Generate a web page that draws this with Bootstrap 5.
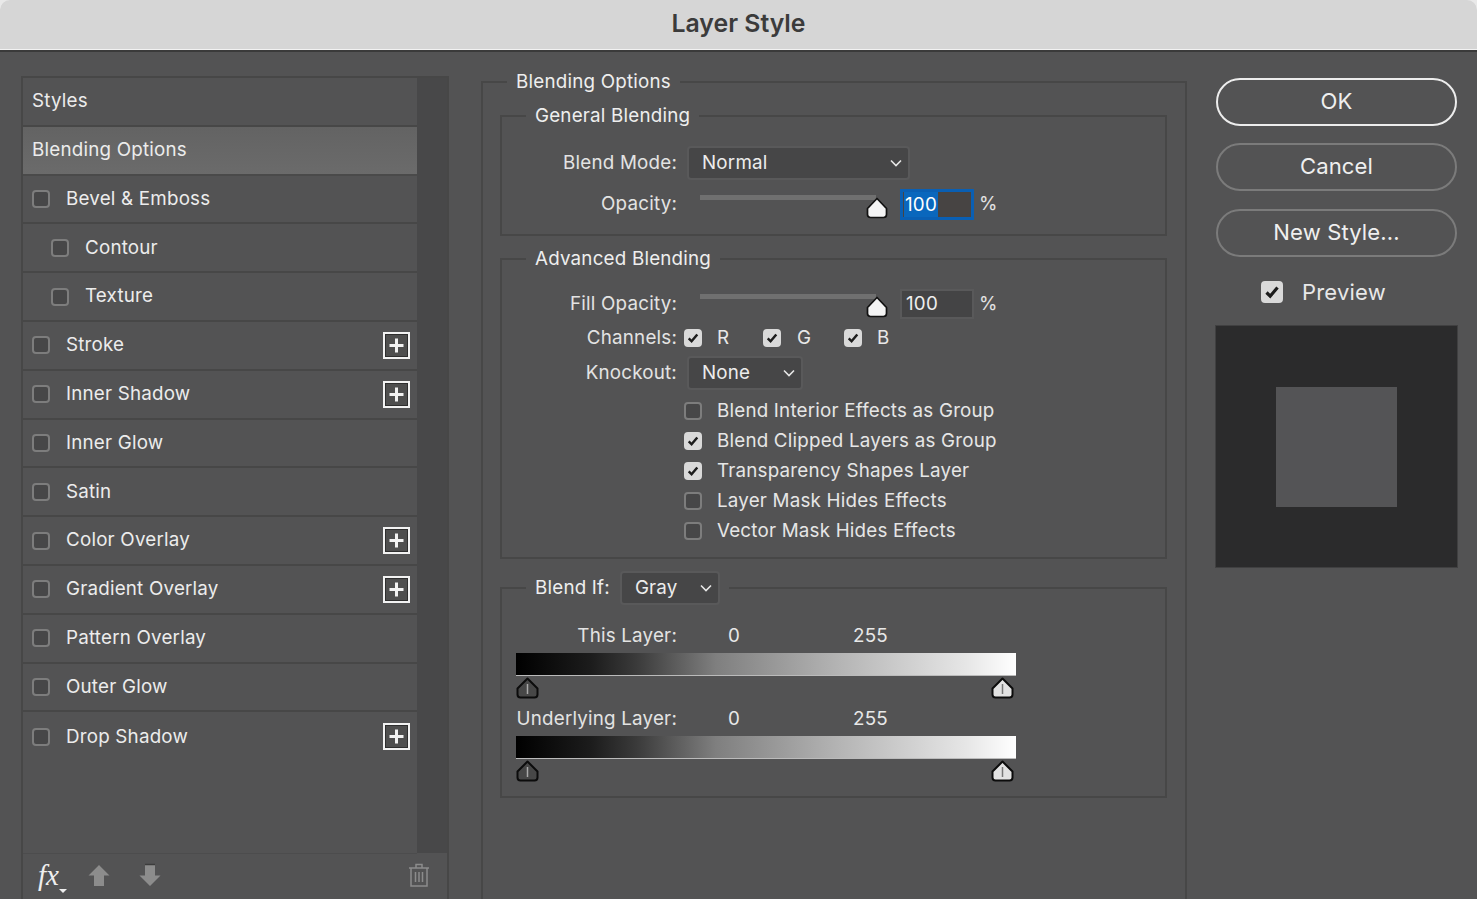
<!DOCTYPE html>
<html lang="en">
<head>
<meta charset="utf-8">
<title>Layer Style</title>
<link href="https://cdn.jsdelivr.net/npm/bootstrap@5.3.0/dist/css/bootstrap.min.css" rel="stylesheet">
<style>
html,body{height:100%;overflow:hidden}
body{background:#e9e9e9;font-family:Inter,"Liberation Sans",sans-serif;font-size:18.8px;color:#e8e8e8;letter-spacing:.2px}
.ttl{height:52px;background:#d6d6d6;border-radius:10px 10px 0 0;border-bottom:2px solid #3a3a3a;box-shadow:inset 0 -1px 0 #f2f2f2;color:#3b3b3b;font-size:24.8px;font-weight:600;letter-spacing:0;padding-bottom:3px}
.mainarea{height:847px;background:#535354}
.leftpane{width:428px;margin-left:21px;margin-top:24px;height:900px;border:2px solid #474747;border-bottom:0;background:#535354}
.leftcols{height:775px}
.stylelist{width:394px;--bs-list-group-bg:transparent;--bs-list-group-color:#ececec;--bs-list-group-border-color:#474747;--bs-list-group-border-width:2px;--bs-list-group-item-padding-x:0;--bs-list-group-item-padding-y:0}
.stylelist .list-group-item{height:48.8px;padding-left:9px;padding-right:7px;display:flex;align-items:center;flex:none}
.stylelist .list-group-item.sel{background:linear-gradient(#636363,#6b6b6b);border-bottom-color:#4a4a4a}
.stylelist .list-group-item.lastrow{border-bottom-color:#505051}
.subrow{padding-left:28px!important}
.scrolltrack{flex:1;background:#484849}
.rowlbl{margin-left:16px}
.toolbar{height:43px;border-top:1px solid #4c4c4d;margin-right:30px}
.fxlabel{font-family:"Liberation Serif",serif;font-style:italic;font-size:29px;line-height:30px;color:#eee;margin-left:15px;letter-spacing:0;width:21px}
.fxcaret{width:0;height:0;border-left:4px solid transparent;border-right:4px solid transparent;border-top:4px solid #eee;align-self:flex-end;margin:0 0 3px 0}
.form-check-input.chk{width:18px;height:18px;margin:0;flex:none;background-color:#474748;border:2px solid #7d7d7d;border-radius:4px;box-shadow:none}
.form-check-input.chk:checked{background-color:#d9d9d9;border-color:#d9d9d9;background-image:url("data:image/svg+xml,%3csvg xmlns='http://www.w3.org/2000/svg' viewBox='0 0 18 18'%3e%3cpath fill='none' stroke='%231c1c1c' stroke-width='3.2' d='M3.500 9.500l3.700 3.700L14.500 4.500'/%3e%3c/svg%3e");background-size:100% 100%}
.form-check-input.chk.chanset{margin-left:7px}
.midpane{width:706px;margin-left:32px}
.grp{border:2px solid #474747;padding:0;min-width:0}
.outergrp{margin-top:18px;height:900px;padding:0 18px 0 17px}
.grp>legend{float:none;width:auto;margin:0 0 0 24px;padding:0 9px;font-size:18.8px;line-height:24px;color:#eeeeee;display:block}
.outergrp>legend{margin-left:7px}
.grp+.grp{margin-top:11px}
.outergrp>.grp:first-of-type{margin-top:10px}
.outergrp>.grp.ifgrp{margin-top:12px}
.lblcol{width:175px;text-align:right;color:#e3e3e3;flex:none}
.frow{display:flex;align-items:center}
.selbox{height:34px;padding:0 24px 0 13px;margin-left:10px;font-size:18.8px;letter-spacing:.2px;background-color:#464647;color:#ececec;border:2px solid #59595a;border-radius:4px;background-image:url("data:image/svg+xml,%3csvg xmlns='http://www.w3.org/2000/svg' viewBox='0 0 14 10'%3e%3cpath fill='none' stroke='%23e6e6e6' stroke-width='1.6' d='M2 2.5l5 5 5-5'/%3e%3c/svg%3e");background-size:14px 10px;background-position:right 5px center;box-shadow:none}
.w223{width:223px}.w116{width:116px}.w100{width:100px}
.slidearea{width:212px;height:30px;position:relative;flex:none;margin-left:11px}
.slidetrk{width:176px;height:5px;background:#707070;margin:5px 0 0 12px}
.slidethumb{position:absolute;left:178px;top:7px;display:block}
.numbox{width:74px;height:30px;background:#444445;border:2px solid #59595a;padding-left:4px;line-height:26px;color:#eee;flex:none}
.numbox.focusbox{height:31px;border-color:#0a5fb3;padding-left:0;background:#474443;border-width:3px;line-height:25px}
.numbox.focusbox span{background:#0a67bd;display:inline-block;padding:0 1px 0 1px;height:25px;color:#fff;margin-left:1px}
.pct{margin-left:5px;color:#e3e3e3}
.chanrow{height:20px;margin-top:9px}
.chanlbl1{width:46px;margin-left:15px}
.chanlbl2{width:47px;margin-left:16px}
.chkrow{height:30px;margin-left:182px;display:flex;align-items:center;color:#e6e6e6}
.chkrow label{margin-left:15px}
.layerrow{height:24px}
.val0{margin-left:51px;width:125px}
.gradbar{width:500px;height:23px;margin-left:14px;margin-top:5px;background:linear-gradient(90deg,#000 0,#1c1c1c 15%,#3a3a3a 24%,#7f7f7f 40%,#b5b5b5 65%,#e6e6e6 90%,#fff 100%);border-bottom:1px solid #bbb}
.thumbs{height:21px;width:500px;margin-left:14px;margin-top:1px;position:relative}
.thumbs svg{position:absolute;top:0}
.thumbs .tl{left:0}.thumbs .tr{left:475px}
.rightpane{width:243px;margin-left:28px;margin-top:26px}
.dlgbtn{height:48px;font-size:22.1px;letter-spacing:.1px;color:#efefef;border:2px solid #7b7b7b;padding:0;display:flex;align-items:center;justify-content:center;background:transparent;margin:0 0 18px 1px;width:241px}
.dlgbtn.primarybtn{border-color:#ededed;margin-bottom:17px}
.dlgbtn:hover{color:#efefef;background:transparent}
.prevrow{margin:10px 0 0 46px;font-size:22px;height:34px}
.prevrow .form-check-input.chk{width:22px;height:22px}
.prevrow label{margin-left:19px}
.prevbox{width:243px;height:243px;background:#2b2b2c;margin-top:16px;border:1px solid #404041}
.prevbox div{width:121px;height:120px;background:#545456}
</style>
</head>
<body>
<div class="ttl d-flex align-items-center justify-content-center">Layer Style</div>
<div class="mainarea d-flex">

  <div class="leftpane">
    <div class="leftcols d-flex">
      <div class="stylelist list-group list-group-flush">
        <div class="list-group-item">Styles</div>
        <div class="list-group-item sel">Blending Options</div>
        <div class="list-group-item"><input class="form-check-input chk" type="checkbox"><span class="rowlbl">Bevel &amp; Emboss</span></div>
        <div class="list-group-item subrow"><input class="form-check-input chk" type="checkbox"><span class="rowlbl">Contour</span></div>
        <div class="list-group-item subrow"><input class="form-check-input chk" type="checkbox"><span class="rowlbl">Texture</span></div>
        <div class="list-group-item"><input class="form-check-input chk" type="checkbox"><span class="rowlbl flex-grow-1">Stroke</span><svg width="27" height="27" viewBox="0 0 27 27"><rect x="1" y="1" width="25" height="25" fill="#4e4e4e" stroke="#f2f2f2" stroke-width="2"/><rect x="2.500" y="2.500" width="22" height="22" fill="none" stroke="#2e2e2e" stroke-width="1"/><path d="M13.500 6.500v14M6.500 13.500h14" stroke="#f2f2f2" stroke-width="3"/></svg></div>
        <div class="list-group-item"><input class="form-check-input chk" type="checkbox"><span class="rowlbl flex-grow-1">Inner Shadow</span><svg width="27" height="27" viewBox="0 0 27 27"><rect x="1" y="1" width="25" height="25" fill="#4e4e4e" stroke="#f2f2f2" stroke-width="2"/><rect x="2.500" y="2.500" width="22" height="22" fill="none" stroke="#2e2e2e" stroke-width="1"/><path d="M13.500 6.500v14M6.500 13.500h14" stroke="#f2f2f2" stroke-width="3"/></svg></div>
        <div class="list-group-item"><input class="form-check-input chk" type="checkbox"><span class="rowlbl">Inner Glow</span></div>
        <div class="list-group-item"><input class="form-check-input chk" type="checkbox"><span class="rowlbl">Satin</span></div>
        <div class="list-group-item"><input class="form-check-input chk" type="checkbox"><span class="rowlbl flex-grow-1">Color Overlay</span><svg width="27" height="27" viewBox="0 0 27 27"><rect x="1" y="1" width="25" height="25" fill="#4e4e4e" stroke="#f2f2f2" stroke-width="2"/><rect x="2.500" y="2.500" width="22" height="22" fill="none" stroke="#2e2e2e" stroke-width="1"/><path d="M13.500 6.500v14M6.500 13.500h14" stroke="#f2f2f2" stroke-width="3"/></svg></div>
        <div class="list-group-item"><input class="form-check-input chk" type="checkbox"><span class="rowlbl flex-grow-1">Gradient Overlay</span><svg width="27" height="27" viewBox="0 0 27 27"><rect x="1" y="1" width="25" height="25" fill="#4e4e4e" stroke="#f2f2f2" stroke-width="2"/><rect x="2.500" y="2.500" width="22" height="22" fill="none" stroke="#2e2e2e" stroke-width="1"/><path d="M13.500 6.500v14M6.500 13.500h14" stroke="#f2f2f2" stroke-width="3"/></svg></div>
        <div class="list-group-item"><input class="form-check-input chk" type="checkbox"><span class="rowlbl">Pattern Overlay</span></div>
        <div class="list-group-item"><input class="form-check-input chk" type="checkbox"><span class="rowlbl">Outer Glow</span></div>
        <div class="list-group-item lastrow"><input class="form-check-input chk" type="checkbox"><span class="rowlbl flex-grow-1">Drop Shadow</span><svg width="27" height="27" viewBox="0 0 27 27"><rect x="1" y="1" width="25" height="25" fill="#4e4e4e" stroke="#f2f2f2" stroke-width="2"/><rect x="2.500" y="2.500" width="22" height="22" fill="none" stroke="#2e2e2e" stroke-width="1"/><path d="M13.500 6.500v14M6.500 13.500h14" stroke="#f2f2f2" stroke-width="3"/></svg></div>
      </div>
      <div class="scrolltrack"></div>
    </div>
    <div class="toolbar d-flex align-items-center">
      <span class="fxlabel">fx</span><span class="fxcaret"></span>
      <svg style="margin-left:20px" width="24" height="24" viewBox="0 0 24 24"><path d="M12 2L22.500 12.500H17V23H7V12.500H1.500z" fill="#8c8c8c"/></svg>
      <svg style="margin-left:27px" width="24" height="24" viewBox="0 0 24 24"><path d="M7 2H17V12.500H22.500L12 23L1.500 12.500H7z" fill="#8c8c8c"/><path d="M7 1.500H17" stroke="#3c3c3c" stroke-width="1.500"/></svg>
      <svg class="ms-auto" style="margin-right:-13px" width="22" height="24" viewBox="0 0 22 24"><g fill="none" stroke="#8c8c8c" stroke-width="1.500"><path d="M1 5h20M8 5V1.500h6V5M3 5v18h16V5M7.500 9v10M11 9v10M14.500 9v10"/></g></svg>
    </div>
  </div>

  <div class="midpane">
    <fieldset class="grp outergrp">
      <legend>Blending Options</legend>

      <fieldset class="grp">
        <legend>General Blending</legend>
        <div class="frow" style="margin-top:18px"><span class="lblcol">Blend Mode:</span><select class="form-select selbox w223"><option>Normal</option></select></div>
        <div class="frow" style="margin:9px 0 14px"><span class="lblcol">Opacity:</span><div class="slidearea"><div class="slidetrk"></div><svg class="slidethumb" width="22" height="22" viewBox="0 0 22 22"><path d="M11 1.500L20.500 11.500V17.500Q20.500 20.500 17.500 20.500H4.500Q1.500 20.500 1.500 17.500V11.500z" fill="#f4f4f4" stroke="#111" stroke-width="1.700" stroke-linejoin="round"/></svg></div><div class="numbox focusbox"><span>100</span></div><span class="pct">%</span></div>
      </fieldset>

      <fieldset class="grp">
        <legend>Advanced Blending</legend>
        <div class="frow" style="margin-top:18px"><span class="lblcol">Fill Opacity:</span><div class="slidearea"><div class="slidetrk"></div><svg class="slidethumb" width="22" height="22" viewBox="0 0 22 22"><path d="M11 1.500L20.500 11.500V17.500Q20.500 20.500 17.500 20.500H4.500Q1.500 20.500 1.500 17.500V11.500z" fill="#f4f4f4" stroke="#111" stroke-width="1.700" stroke-linejoin="round"/></svg></div><div class="numbox">100</div><span class="pct">%</span></div>
        <div class="frow chanrow"><span class="lblcol">Channels:</span><input class="form-check-input chk chanset" type="checkbox" checked><span class="chanlbl1">R</span><input class="form-check-input chk" type="checkbox" checked><span class="chanlbl2">G</span><input class="form-check-input chk" type="checkbox" checked><span class="chanlbl1">B</span></div>
        <div class="frow" style="margin:8px 0 6px"><span class="lblcol">Knockout:</span><select class="form-select selbox w116"><option>None</option></select></div>
        <div class="chkrow"><input class="form-check-input chk" type="checkbox" id="c1"><label for="c1">Blend Interior Effects as Group</label></div>
        <div class="chkrow"><input class="form-check-input chk" type="checkbox" id="c2" checked><label for="c2">Blend Clipped Layers as Group</label></div>
        <div class="chkrow"><input class="form-check-input chk" type="checkbox" id="c3" checked><label for="c3">Transparency Shapes Layer</label></div>
        <div class="chkrow"><input class="form-check-input chk" type="checkbox" id="c4"><label for="c4">Layer Mask Hides Effects</label></div>
        <div class="chkrow" style="margin-bottom:11px"><input class="form-check-input chk" type="checkbox" id="c5"><label for="c5">Vector Mask Hides Effects</label></div>
      </fieldset>

      <fieldset class="grp ifgrp">
        <legend class="frow" style="display:flex"><span>Blend If:</span><select class="form-select selbox w100">
          <option>Gray</option></select></legend>
        <div class="frow layerrow" style="margin-top:19px"><span class="lblcol">This Layer:</span><span class="val0">0</span><span>255</span></div>
        <div class="gradbar"></div>
        <div class="thumbs">
          <svg class="tl" width="24" height="22" viewBox="0 0 24 22"><path d="M11.500 1.500L21.500 11.500V17.500Q21.500 20.500 18.500 20.500H4.500Q1.500 20.500 1.500 17.500V11.500z" fill="#474747" stroke="#0c0c0c" stroke-width="2" stroke-linejoin="round"/><path d="M11.500 7v10" stroke="#aaa" stroke-width="1.500"/></svg>
          <svg class="tr" width="24" height="22" viewBox="0 0 24 22"><path d="M11.500 1.500L21.500 11.500V17.500Q21.500 20.500 18.500 20.500H4.500Q1.500 20.500 1.500 17.500V11.500z" fill="#e2e2e2" stroke="#0c0c0c" stroke-width="2" stroke-linejoin="round"/><path d="M11.500 7v10" stroke="#777" stroke-width="1.500"/></svg>
        </div>
        <div class="frow layerrow" style="margin-top:9px"><span class="lblcol">Underlying Layer:</span><span class="val0">0</span><span>255</span></div>
        <div class="gradbar"></div>
        <div class="thumbs" style="margin-bottom:15px">
          <svg class="tl" width="24" height="22" viewBox="0 0 24 22"><path d="M11.500 1.500L21.500 11.500V17.500Q21.500 20.500 18.500 20.500H4.500Q1.500 20.500 1.500 17.500V11.500z" fill="#474747" stroke="#0c0c0c" stroke-width="2" stroke-linejoin="round"/><path d="M11.500 7v10" stroke="#aaa" stroke-width="1.500"/></svg>
          <svg class="tr" width="24" height="22" viewBox="0 0 24 22"><path d="M11.500 1.500L21.500 11.500V17.500Q21.500 20.500 18.500 20.500H4.500Q1.500 20.500 1.500 17.500V11.500z" fill="#e2e2e2" stroke="#0c0c0c" stroke-width="2" stroke-linejoin="round"/><path d="M11.500 7v10" stroke="#777" stroke-width="1.500"/></svg>
        </div>
      </fieldset>
    </fieldset>
  </div>

  <div class="rightpane">
    <button class="btn rounded-pill dlgbtn primarybtn" type="button">OK</button>
    <button class="btn rounded-pill dlgbtn" type="button">Cancel</button>
    <button class="btn rounded-pill dlgbtn" type="button">New Style...</button>
    <div class="prevrow d-flex align-items-center"><input class="form-check-input chk" type="checkbox" id="pv" checked><label for="pv">Preview</label></div>
    <div class="prevbox d-flex align-items-center justify-content-center"><div></div></div>
  </div>
</div>
<script src="https://cdn.jsdelivr.net/npm/bootstrap@5.3.0/dist/js/bootstrap.bundle.min.js"></script>
</body>
</html>
